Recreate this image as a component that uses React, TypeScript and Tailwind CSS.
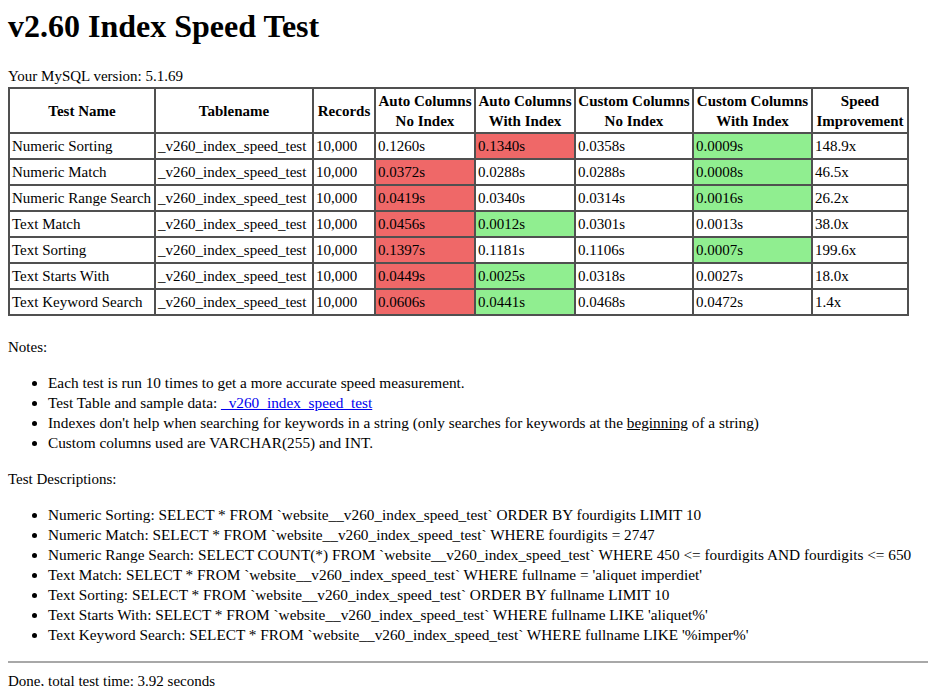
import type React from 'react';

type Row = {
  name: string;
  table: string;
  records: string;
  autoNo: string;
  autoWith: string;
  customNo: string;
  customWith: string;
  speed: string;
  // which cells get a colour: r = slow (red), g = fast (green)
  marks: [string, string, string, string];
};

const rows: Row[] = [
  { name: 'Numeric Sorting', table: '_v260_index_speed_test', records: '10,000', autoNo: '0.1260s', autoWith: '0.1340s', customNo: '0.0358s', customWith: '0.0009s', speed: '148.9x', marks: ['', 'r', '', 'g'] },
  { name: 'Numeric Match', table: '_v260_index_speed_test', records: '10,000', autoNo: '0.0372s', autoWith: '0.0288s', customNo: '0.0288s', customWith: '0.0008s', speed: '46.5x', marks: ['r', '', '', 'g'] },
  { name: 'Numeric Range Search', table: '_v260_index_speed_test', records: '10,000', autoNo: '0.0419s', autoWith: '0.0340s', customNo: '0.0314s', customWith: '0.0016s', speed: '26.2x', marks: ['r', '', '', 'g'] },
  { name: 'Text Match', table: '_v260_index_speed_test', records: '10,000', autoNo: '0.0456s', autoWith: '0.0012s', customNo: '0.0301s', customWith: '0.0013s', speed: '38.0x', marks: ['r', 'g', '', ''] },
  { name: 'Text Sorting', table: '_v260_index_speed_test', records: '10,000', autoNo: '0.1397s', autoWith: '0.1181s', customNo: '0.1106s', customWith: '0.0007s', speed: '199.6x', marks: ['r', '', '', 'g'] },
  { name: 'Text Starts With', table: '_v260_index_speed_test', records: '10,000', autoNo: '0.0449s', autoWith: '0.0025s', customNo: '0.0318s', customWith: '0.0027s', speed: '18.0x', marks: ['r', 'g', '', ''] },
  { name: 'Text Keyword Search', table: '_v260_index_speed_test', records: '10,000', autoNo: '0.0606s', autoWith: '0.0441s', customNo: '0.0468s', customWith: '0.0472s', speed: '1.4x', marks: ['r', 'g', '', ''] },
];

const queries = [
  'Numeric Sorting: SELECT * FROM `website__v260_index_speed_test` ORDER BY fourdigits LIMIT 10',
  'Numeric Match: SELECT * FROM `website__v260_index_speed_test` WHERE fourdigits = 2747',
  'Numeric Range Search: SELECT COUNT(*) FROM `website__v260_index_speed_test` WHERE 450 <= fourdigits AND fourdigits <= 650',
  "Text Match: SELECT * FROM `website__v260_index_speed_test` WHERE fullname = 'aliquet imperdiet'",
  'Text Sorting: SELECT * FROM `website__v260_index_speed_test` ORDER BY fullname LIMIT 10',
  "Text Starts With: SELECT * FROM `website__v260_index_speed_test` WHERE fullname LIKE 'aliquet%'",
  "Text Keyword Search: SELECT * FROM `website__v260_index_speed_test` WHERE fullname LIKE '%imper%'",
];

const cell = 'border border-[#505050] px-[2px] py-0 text-left align-middle whitespace-nowrap';
const head = 'border border-[#505050] px-[1px] py-0 text-center align-middle font-bold leading-[20px] whitespace-nowrap';

function tone(mark: string) {
  if (mark === 'r') return ' bg-[#ef6868]';
  if (mark === 'g') return ' bg-[#90ee90]';
  return '';
}

function TimingCell({ value, mark }: { value: string; mark: string }) {
  return <td className={cell + tone(mark)}>{value}</td>;
}

export default function App() {
  return (
    <div className="min-h-screen overflow-hidden bg-white px-2 pt-2 pb-6 text-[15px] leading-[20px] text-black" style={{ fontFamily: '"Liberation Serif", "Times New Roman", serif' }}>
      <h1 className="mb-[21px] text-[32px] leading-[37px] font-bold">v2.60 Index Speed Test</h1>

      <div className="leading-[21px]">Your MySQL version: 5.1.69</div>

      {/* results table */}
      <table className="w-[901px] table-fixed border-separate border-spacing-0 border border-[#505050]">
        <colgroup>
          <col className="w-[146px]" />
          <col className="w-[158px]" />
          <col className="w-[62px]" />
          <col className="w-[100px]" />
          <col className="w-[100px]" />
          <col className="w-[118px]" />
          <col className="w-[119px]" />
          <col className="w-[96px]" />
        </colgroup>
        <thead>
          <tr className="h-[45px]">
            <th className={head}>Test Name</th>
            <th className={head}>Tablename</th>
            <th className={head}>Records</th>
            <th className={head}>Auto Columns<br />No Index</th>
            <th className={head}>Auto Columns<br />With Index</th>
            <th className={head}>Custom Columns<br />No Index</th>
            <th className={head}>Custom Columns<br />With Index</th>
            <th className={head}>Speed<br />Improvement</th>
          </tr>
        </thead>
        <tbody>
          {rows.map((r) => (
            <tr key={r.name} className="h-[26px]">
              <td className={cell}>{r.name}</td>
              <td className={cell}>{r.table}</td>
              <td className={cell}>{r.records}</td>
              <TimingCell value={r.autoNo} mark={r.marks[0]} />
              <TimingCell value={r.autoWith} mark={r.marks[1]} />
              <TimingCell value={r.customNo} mark={r.marks[2]} />
              <TimingCell value={r.customWith} mark={r.marks[3]} />
              <td className={cell}>{r.speed}</td>
            </tr>
          ))}
        </tbody>
      </table>

      <p className="mt-[21px]">Notes:</p>
      <ul className="my-4 list-disc pl-10 text-[15.3px]">
        <li>Each test is run 10 times to get a more accurate speed measurement.</li>
        <li>
          Test Table and sample data:{' '}
          <a href="#" className="text-[#0000ee] underline">_v260_index_speed_test</a>
        </li>
        <li>
          Indexes don't help when searching for keywords in a string (only searches for keywords at the{' '}
          <u>beginning</u> of a string)
        </li>
        <li>Custom columns used are VARCHAR(255) and INT.</li>
      </ul>

      <p>Test Descriptions:</p>
      <ul className="my-4 list-disc pl-10 text-[15.3px]">
        {queries.map((q) => (
          <li key={q} className="whitespace-nowrap">{q}</li>
        ))}
      </ul>

      <hr className="my-2 -mr-2 border-0 border-t-2 border-[#a8a8a8]" />
      <p>Done, total test time: 3.92 seconds</p>
    </div>
  );
}
